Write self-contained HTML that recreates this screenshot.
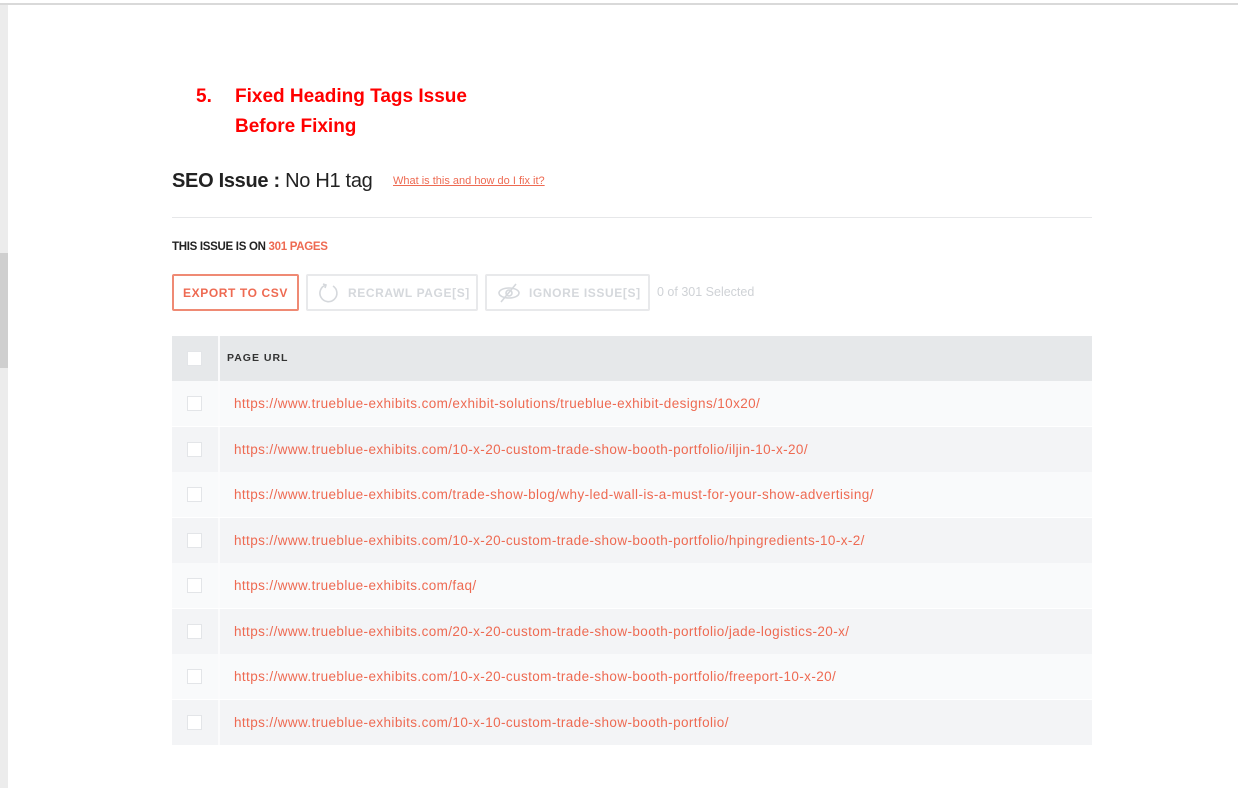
<!DOCTYPE html>
<html><head><meta charset="utf-8"><style>
*{margin:0;padding:0;box-sizing:border-box}
body{width:1238px;height:788px;background:#fff;position:relative;overflow:hidden;font-family:"Liberation Sans",sans-serif}
.abs{position:absolute;white-space:nowrap}
.h{color:#f00;font-weight:bold;font-size:19px}
.btn{position:absolute;top:274px;height:37px;border:2px solid #e8e9eb;border-radius:2px;font-weight:bold;font-size:12px;letter-spacing:0.6px;color:#d5d8dc;display:flex;align-items:center;white-space:nowrap}
.row{position:absolute;left:172px;width:920px;height:45px}
.cb{position:absolute;left:15px;top:15px;width:15px;height:15px;background:#fff;border:1px solid #e3e5e8}
.url{position:absolute;left:62px;top:0;line-height:45px;font-size:13.5px;letter-spacing:0.4px;color:#ee6a52;white-space:nowrap}
.div{position:absolute;left:46px;top:0;width:2px;height:100%;background:#fbfbfc}
</style></head><body>
<div class="abs" style="left:0;top:3px;width:1238px;height:2px;background:#d9d9d9"></div>
<div class="abs" style="left:0;top:5px;width:8px;height:783px;background:#ececec"></div>
<div class="abs" style="left:0;top:253px;width:8px;height:115px;background:#cfcfcf"></div>
<div class="abs h" style="left:196px;top:86px">5.</div>
<div class="abs h" style="left:235px;top:86px">Fixed Heading Tags Issue</div>
<div class="abs h" style="left:235px;top:116px">Before Fixing</div>
<div class="abs" style="left:172px;top:170px;font-size:20px;color:#222;letter-spacing:-0.3px"><b>SEO Issue :</b> No H1 tag</div>
<div class="abs" style="left:393px;top:175px;font-size:11px;color:#ee6a52;text-decoration:underline">What is this and how do I fix it?</div>
<div class="abs" style="left:172px;top:217px;width:920px;height:1px;background:#e6e7e9"></div>
<div class="abs" style="left:172px;top:241px;font-size:11.5px;font-weight:bold;color:#222;letter-spacing:-0.3px">THIS ISSUE IS ON <span style="color:#ee6a52">301 PAGES</span></div>
<div class="btn" style="left:172px;width:127px;border-color:#ef8a74;color:#ee6a52;justify-content:center">EXPORT TO CSV</div>
<div class="btn" style="left:306px;width:172px;padding-left:10px"><svg width="22" height="22" viewBox="0 0 22 22" style="margin-right:8px;flex:none"><path d="M8 3 A8.5 8.5 0 1 0 15 4" fill="none" stroke="#d5d8dc" stroke-width="1.6"/><path d="M5 2 L8 3 L7 6" fill="none" stroke="#d5d8dc" stroke-width="1.6"/></svg>RECRAWL PAGE[S]</div>
<div class="btn" style="left:485px;width:165px;padding-left:10px"><svg width="24" height="22" viewBox="0 0 24 22" style="margin-right:8px;flex:none"><ellipse cx="12" cy="11" rx="10" ry="5" fill="none" stroke="#d5d8dc" stroke-width="1.6"/><circle cx="12" cy="11" r="3" fill="none" stroke="#d5d8dc" stroke-width="1.6"/><path d="M4 20 L19 2" stroke="#d5d8dc" stroke-width="1.6"/></svg>IGNORE ISSUE[S]</div>
<div class="abs" style="left:657px;top:285px;font-size:12.5px;color:#cfd2d6">0 of 301 Selected</div>
<div class="row" style="top:336px;background:#e6e8ea"><div class="cb"></div><div class="div"></div><div class="abs" style="left:55px;top:0;line-height:45px;font-size:10.5px;font-weight:bold;letter-spacing:1px;color:#333">PAGE URL</div></div>
<div class="row" style="top:381px;background:#f9fafb"><div class="cb"></div><div class="div"></div><div class="url">https://www.trueblue-exhibits.com/exhibit-solutions/trueblue-exhibit-designs/10x20/</div></div>
<div class="row" style="top:427px;background:#f3f4f6"><div class="cb"></div><div class="div"></div><div class="url">https://www.trueblue-exhibits.com/10-x-20-custom-trade-show-booth-portfolio/iljin-10-x-20/</div></div>
<div class="row" style="top:472px;background:#f9fafb"><div class="cb"></div><div class="div"></div><div class="url">https://www.trueblue-exhibits.com/trade-show-blog/why-led-wall-is-a-must-for-your-show-advertising/</div></div>
<div class="row" style="top:518px;background:#f3f4f6"><div class="cb"></div><div class="div"></div><div class="url">https://www.trueblue-exhibits.com/10-x-20-custom-trade-show-booth-portfolio/hpingredients-10-x-2/</div></div>
<div class="row" style="top:563px;background:#f9fafb"><div class="cb"></div><div class="div"></div><div class="url">https://www.trueblue-exhibits.com/faq/</div></div>
<div class="row" style="top:609px;background:#f3f4f6"><div class="cb"></div><div class="div"></div><div class="url">https://www.trueblue-exhibits.com/20-x-20-custom-trade-show-booth-portfolio/jade-logistics-20-x/</div></div>
<div class="row" style="top:654px;background:#f9fafb"><div class="cb"></div><div class="div"></div><div class="url">https://www.trueblue-exhibits.com/10-x-20-custom-trade-show-booth-portfolio/freeport-10-x-20/</div></div>
<div class="row" style="top:700px;background:#f3f4f6"><div class="cb"></div><div class="div"></div><div class="url">https://www.trueblue-exhibits.com/10-x-10-custom-trade-show-booth-portfolio/</div></div>
</body></html>
